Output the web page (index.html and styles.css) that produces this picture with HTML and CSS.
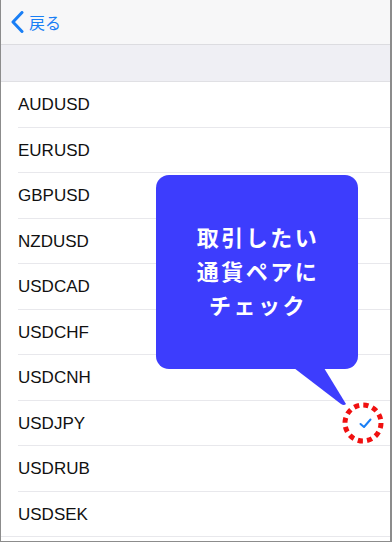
FILE: index.html
```html
<!DOCTYPE html>
<html lang="ja">
<head>
<meta charset="utf-8">
<link rel="stylesheet" href="styles.css">
</head>
<body>
<div class="screen">
  <header class="nav">
    <a class="back">
      <svg class="chev" width="14" height="22" viewBox="0 0 14 22"><path d="M12 1.5 L3 11 L12 20.5" fill="none" stroke="#1a7ff5" stroke-width="3" stroke-linecap="round" stroke-linejoin="round"/></svg>
      <span class="back-text">戻る</span>
    </a>
  </header>
  <div class="section-gap"></div>
  <ul class="list">
    <li class="row"><span>AUDUSD</span></li>
    <li class="row"><span>EURUSD</span></li>
    <li class="row"><span>GBPUSD</span></li>
    <li class="row"><span>NZDUSD</span></li>
    <li class="row"><span>USDCAD</span></li>
    <li class="row"><span>USDCHF</span></li>
    <li class="row"><span>USDCNH</span></li>
    <li class="row"><span>USDJPY</span>
      <svg class="check" width="13" height="11" viewBox="0 0 13 11"><path d="M1.5 6 L5 9 L11.5 1.5" fill="none" stroke="#1a7ff5" stroke-width="2" stroke-linecap="round" stroke-linejoin="round"/></svg>
    </li>
    <li class="row"><span>USDRUB</span></li>
    <li class="row last"><span>USDSEK</span></li>
  </ul>

  <div class="bubble">
    <p class="bubble-text">取引したい<br>通貨ペアに<br>チェック</p>
    <svg class="tail" width="60" height="40" viewBox="0 0 60 40"><path d="M0 0 L30 0 L52 36 Q50 38 47 36 Z" fill="#3d3dfd"/></svg>
  </div>
  <svg class="ring" width="46" height="46" viewBox="0 0 46 46"><circle cx="23" cy="23" r="18" fill="none" stroke="#f01010" stroke-width="5" stroke-dasharray="5.2 4.2"/></svg>
</div>
</body>
</html>
```
FILE: styles.css
```css
* { box-sizing: border-box; }
html, body { margin: 0; padding: 0; }
body { width: 392px; height: 542px; overflow: hidden; background: #fff; font-family: "Liberation Sans", Arial, "Noto Sans CJK JP", sans-serif; }
.screen {
  position: relative;
  width: 392px; height: 542px;
  border-left: 1px solid #8c8c8c;
  border-right: 2px solid #8c8c8c;
  border-bottom: 1px solid #8c8c8c;
  background: #fff;
  display: flex; flex-direction: column;
}
.nav {
  height: 45px;
  background: #f7f7f8;
  border-bottom: 1px solid #dcdce0;
  display: flex; align-items: center;
  padding-left: 9px;
}
.back { display: flex; align-items: center; gap: 5px; color: #1a7ff5; }
.chev { display: block; }
.back-text { font-family: "Noto Sans CJK JP", sans-serif; font-size: 16px; line-height: 20px; margin-top: -1px; }
.section-gap {
  height: 37px;
  background: #efeff4;
  border-bottom: 1px solid #e0e0e4;
}
.list { list-style: none; margin: 0; padding: 0; }
.row {
  height: 45.5px;
  margin-left: 17px;
  padding-right: 14px;
  padding-top: 2px;
  border-bottom: 1px solid #e8e8ec;
  display: flex; align-items: center; justify-content: space-between;
  font-size: 17px; color: #111;
}
.row.last { margin-left: 0; padding-left: 17px; }
.check { display: block; margin-right: 4px; }
.bubble {
  position: absolute;
  left: 155px; top: 175px;
  width: 202px; height: 194px;
  background: #3d3dfd;
  border-radius: 13px;
  display: flex; align-items: center; justify-content: center;
}
.bubble-text {
  margin: 0 0 4px;
  color: #fff;
  font-family: "Noto Sans CJK JP", sans-serif;
  font-weight: 700;
  font-size: 22px;
  line-height: 34px;
  letter-spacing: 2.5px;
  text-align: center;
  padding-left: 2px;
}
.tail { position: absolute; left: 138px; top: 193px; display: block; }
.ring { position: absolute; left: 339px; top: 400px; display: block; }
```
